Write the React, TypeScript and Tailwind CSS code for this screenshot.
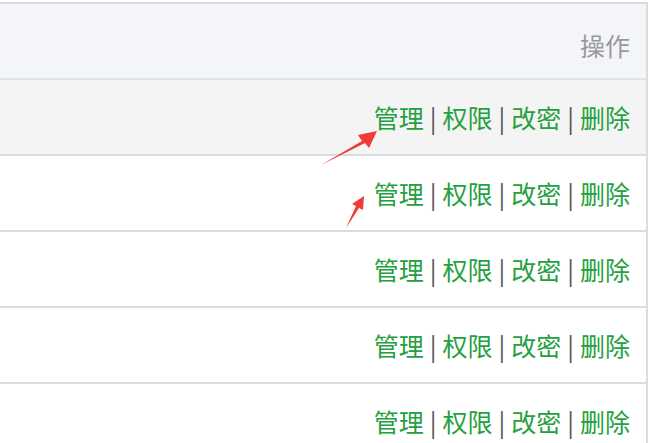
const rows = [0, 1, 2, 3, 4];

function Actions() {
  const links = ["管理", "权限", "改密", "删除"];
  return (
    <div className="flex items-center">
      {links.map((l, i) => (
        <span key={l} className="flex items-center">
          {i > 0 && <span className="mx-[6px] text-[#555]">|</span>}
          <a href="#" className="text-[#24a040]">
            {l}
          </a>
        </span>
      ))}
    </div>
  );
}

export default function App() {
  return (
    <div
      className="relative h-[443px] w-[668px] overflow-hidden bg-white pt-[2px]"
      style={{ fontFamily: '"Noto Sans CJK SC", "Microsoft YaHei", sans-serif' }}
    >
      <div className="w-[648px] border-t-2 border-r-2 border-[#dcdcdc] text-[25px] leading-none">
        <div className="flex h-[76px] items-center justify-end border-b-2 border-[#dde3e7] bg-[#f4f5f9] pt-[8px] pr-[16px] text-[#999]">
          操作
        </div>
        {rows.map((r) => (
          <div
            key={r}
            className={
              "flex h-[76px] items-center justify-end border-b-2 border-[#dcdcdc] pr-[16px] " +
              (r === 0 ? "bg-[#f4f4f4]" : "bg-white")
            }
          >
            <Actions />
          </div>
        ))}
      </div>

      {/* annotation arrows */}
      <svg className="pointer-events-none absolute left-0 top-0" width="668" height="443">
        <polygon points="321,165 362,141 358,135 377,131 369,148 365,143" fill="#f23a3a" />
        <polygon points="346,228 356,206 352,204 364,196 363,210 359,208" fill="#f23a3a" />
      </svg>
    </div>
  );
}
